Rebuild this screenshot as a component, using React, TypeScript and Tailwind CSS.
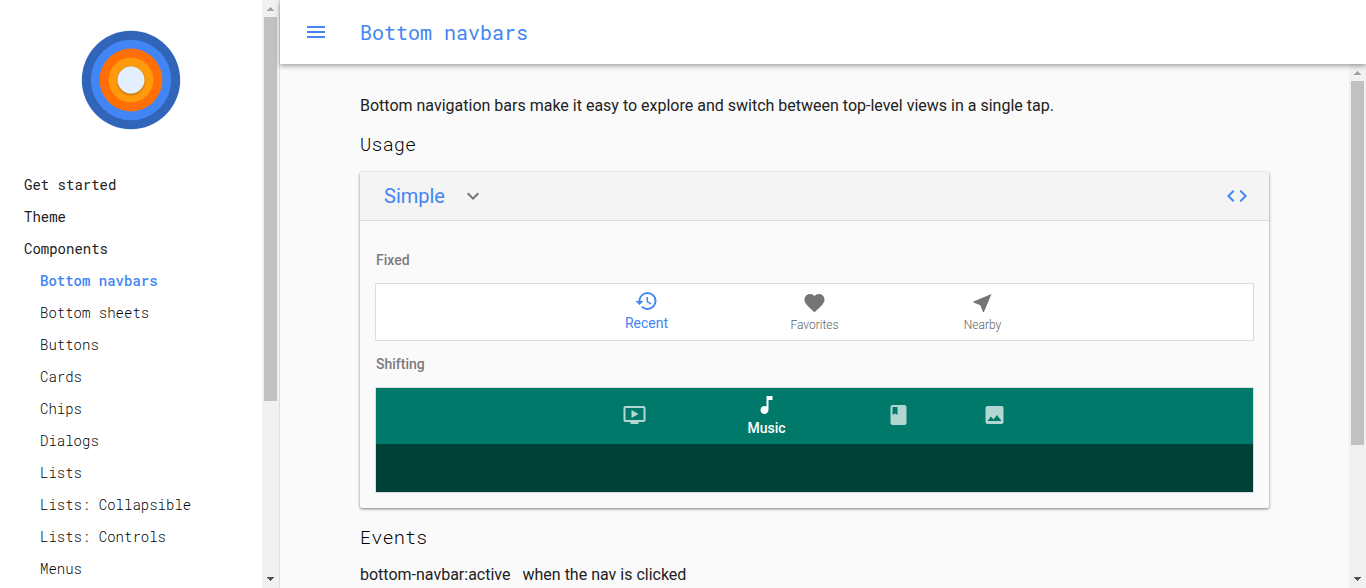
import type { ReactNode } from 'react';
import {
  MdBook,
  MdCode,
  MdExpandMore,
  MdFavorite,
  MdHistory,
  MdImage,
  MdMenu,
  MdMusicNote,
  MdNearMe,
  MdOndemandVideo,
} from 'react-icons/md';

const sections = ['Get started', 'Theme', 'Components'];
const components = [
  'Bottom navbars',
  'Bottom sheets',
  'Buttons',
  'Cards',
  'Chips',
  'Dialogs',
  'Lists',
  'Lists: Collapsible',
  'Lists: Controls',
  'Menus',
];

function Scrollbar({ children }: { children: ReactNode }) {
  return (
    <div className="flex h-full w-[17px] shrink-0 flex-col items-center justify-between bg-[#f1f1f1]">
      <div className="flex flex-col items-center">
        <svg className="h-[17px] w-[17px]" viewBox="0 0 17 17" shapeRendering="crispEdges">
          <path d="M8 7h1v1h1v1h1v1h1v1H5v-1h1V9h1V8h1z" fill="#a3a3a3" />
        </svg>
        {children}
      </div>
      <svg className="h-[17px] w-[17px]" viewBox="0 0 17 17" shapeRendering="crispEdges">
        <path d="M5 6h7v1h-1v1h-1v1H9v1H8V9H7V8H6V7H5z" fill="#505050" />
      </svg>
    </div>
  );
}

function Logo() {
  return (
    <svg className="h-[100px] w-[100px]" viewBox="0 0 100 100">
      <defs>
        <filter id="lift" x="-30%" y="-30%" width="160%" height="160%">
          <feDropShadow dx="0" dy="1" stdDeviation="1" floodOpacity="0.4" />
        </filter>
      </defs>
      <circle cx="50" cy="50" r="49.2" fill="#3065ba" />
      <circle cx="50" cy="50" r="40.2" fill="#4285f4" />
      <circle cx="50" cy="50" r="31.4" fill="#ff6f05" />
      <circle cx="50" cy="50" r="22.4" fill="#ff9a0c" />
      <circle cx="50" cy="50" r="13.4" fill="#e1effe" filter="url(#lift)" />
    </svg>
  );
}

function Sidebar() {
  return (
    <aside className="flex h-full w-[280px] shrink-0 border-r border-[#dedede] bg-white">
      <div className="flex min-w-0 flex-1 flex-col overflow-hidden">
        <div className="flex h-[169px] shrink-0 justify-center pt-[30px]">
          <Logo />
        </div>
        <nav className="font-['Roboto_Mono','DejaVu_Sans_Mono',monospace] text-sm">
          {sections.map((name) => (
            <div key={name} className="flex h-8 items-center pl-6 font-[450] text-[#212121]">
              {name}
            </div>
          ))}
          {components.map((name, i) => (
            <div
              key={name}
              className={
                i === 0
                  ? 'flex h-8 items-center pl-10 font-medium text-[#4285f4]'
                  : 'flex h-8 items-center pl-10 font-light text-black'
              }
            >
              {name}
            </div>
          ))}
        </nav>
      </div>
      <Scrollbar>
        <div className="h-96 w-[13px] bg-[#c1c1c1]" />
      </Scrollbar>
    </aside>
  );
}

function FixedNavbar() {
  return (
    <div className="flex h-14 justify-center bg-white ring-1 ring-[#dcdcdc]">
      <div className="flex w-[168px] flex-col items-center pt-[5px] text-sm leading-5 text-[#4285f4]">
        <MdHistory className="mr-px size-6 translate-x-[0.5px]" />
        <span>Recent</span>
      </div>
      <div className="flex w-[168px] flex-col items-center pt-[7px] text-xs leading-5 text-[#757575]">
        <MdFavorite className="mr-px size-6 translate-x-[0.5px]" />
        <span className="font-light text-[#616161]">Favorites</span>
      </div>
      <div className="flex w-[168px] flex-col items-center pt-[7px] text-xs leading-5 text-[#757575]">
        <MdNearMe className="mr-px size-6 translate-x-[0.5px]" />
        <span className="font-light text-[#616161]">Nearby</span>
      </div>
    </div>
  );
}

function ShiftingNavbar() {
  return (
    <div className="bg-[#004037] ring-1 ring-[#dcdcdc]">
      <div className="flex h-14 justify-center bg-[#00796b]">
        <div className="flex w-24 justify-center pt-[15px] text-[#b2d7d3]">
          <MdOndemandVideo className="mr-px size-6 translate-x-[0.5px]" />
        </div>
        <div className="flex w-[168px] flex-col items-center pt-[5px] text-sm leading-[22px] font-medium text-white">
          <MdMusicNote className="mr-px size-6 translate-x-[0.5px]" />
          <span>Music</span>
        </div>
        <div className="flex w-24 justify-center pt-[15px] text-[#b2d7d3]">
          <MdBook className="mr-px size-6 translate-x-[0.5px]" />
        </div>
        <div className="flex w-24 justify-center pt-[15px] text-[#b2d7d3]">
          <MdImage className="mr-px size-6 translate-x-[0.5px]" />
        </div>
      </div>
      <div className="h-12" />
    </div>
  );
}

export default function App() {
  return (
    <div className="flex h-[588px] w-full overflow-hidden bg-[#fafafa] font-[Roboto,sans-serif] text-[#212121]">
      <Sidebar />
      <div className="flex min-w-0 flex-1 flex-col">
        <header className="relative z-10 flex h-16 shrink-0 items-center bg-white pl-6 text-[#4285f4] shadow-[0_2px_5px_rgba(0,0,0,0.36)]">
          <MdMenu className="size-6" />
          <h1 className="ml-8 font-['Roboto_Mono','DejaVu_Sans_Mono',monospace] text-xl">Bottom navbars</h1>
        </header>
        <div className="flex min-h-0 flex-1">
          <main className="min-w-0 flex-1 overflow-hidden px-20 pt-[30px]">
            <p className="leading-6">
              Bottom navigation bars make it easy to explore and switch between top-level views in a single tap.
            </p>
            <h2 className="mt-3.5 font-['Roboto_Mono','DejaVu_Sans_Mono',monospace] text-[18.72px] leading-6 font-light text-black">
              Usage
            </h2>
            <section className="mt-4 h-[336px] rounded-xs shadow-[0_1px_3px_rgba(0,0,0,0.5)]">
              <div className="flex h-[49px] items-center rounded-t-xs border-b border-[#dcdcdc] bg-[#f4f4f4] px-5">
                <span className="pl-1 text-xl text-[#4285f4]">Simple</span>
                <MdExpandMore className="ml-4 size-6 text-[#757575]" />
                <MdCode className="ml-auto size-6 text-[#4285f4]" />
              </div>
              <div className="flex flex-col px-4 text-sm font-medium text-[#7c7c7c]">
                <div className="flex h-[63px] items-center pt-[15px]">Fixed</div>
                <div className="font-normal">
                  <FixedNavbar />
                </div>
                <div className="flex h-12 items-center">Shifting</div>
                <ShiftingNavbar />
              </div>
            </section>
            <h2 className="mt-[17px] font-['Roboto_Mono','DejaVu_Sans_Mono',monospace] text-[18.72px] leading-6 font-light text-black">
              Events
            </h2>
            <div className="mt-3.5 flex gap-3 leading-6">
              <span>bottom-navbar:active</span>
              <span>when the nav is clicked</span>
            </div>
          </main>
          <Scrollbar>
            <div className="h-[364px] w-[13px] bg-[#c1c1c1]" />
          </Scrollbar>
        </div>
      </div>
    </div>
  );
}
